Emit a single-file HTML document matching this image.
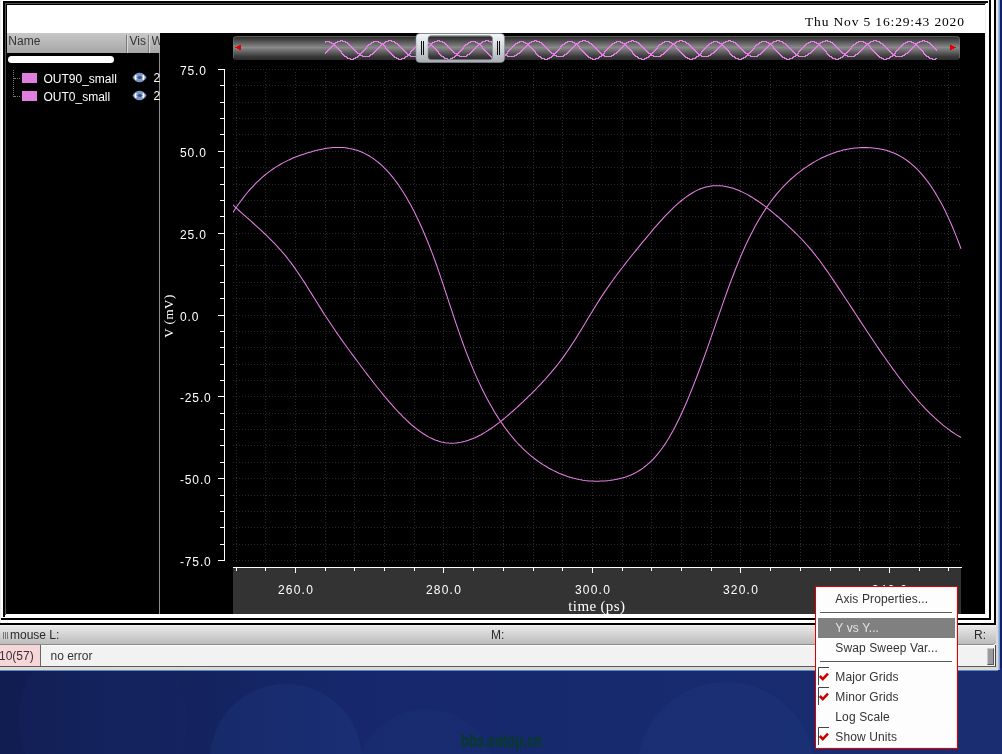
<!DOCTYPE html>
<html><head><meta charset="utf-8"><style>
*{margin:0;padding:0;box-sizing:border-box}
html,body{width:1002px;height:754px;overflow:hidden}
body{position:relative;font-family:"Liberation Sans",sans-serif;background:#16286a;will-change:transform}
.a{position:absolute}
.tk{font-family:"Liberation Sans",sans-serif;font-size:12px;letter-spacing:0.85px;fill:#fff}
.ser{font-family:"Liberation Serif",serif;fill:#fff}
.ui{font-size:12px;color:#2e2e2e;white-space:pre;line-height:1}
.mi{position:absolute;left:19.3px;font-size:12px;letter-spacing:0.12px;color:#333;white-space:pre;line-height:1}
</style></head><body>
<!-- desktop -->
<div class="a" style="left:0;top:660px;width:1002px;height:94px;background:linear-gradient(90deg,#111d50 0%,#16286b 35%,#192d70 100%)"></div>
<div class="a" style="left:18px;top:635px;width:170px;height:170px;border-radius:50%;background:rgba(30,50,120,0.12)"></div>
<div class="a" style="left:210px;top:684px;width:152px;height:152px;border-radius:50%;background:rgba(45,80,160,0.16)"></div>
<div class="a" style="left:356px;top:709px;width:140px;height:140px;border-radius:50%;background:rgba(45,80,160,0.07)"></div>
<div class="a" style="left:637px;top:682px;width:178px;height:178px;border-radius:50%;background:rgba(45,80,160,0.13)"></div>
<div class="a" style="left:460.5px;top:732px;font:bold 17px 'Liberation Sans',sans-serif;color:#0a3934;-webkit-text-stroke:0.6px #0a3934;transform:scale(0.775,1.04);transform-origin:0 0;white-space:pre;line-height:1">bbs.eetop.cn</div>
<!-- window base -->
<div class="a" style="left:0;top:0;width:996px;height:671px;background:#fff"></div>
<div class="a" style="left:0;top:0;width:1px;height:624px;background:#ececec"></div>
<div class="a" style="left:996px;top:0;width:2px;height:670px;background:#e8e4e0"></div>
<div class="a" style="left:998px;top:0;width:2px;height:670px;background:linear-gradient(90deg,#b4cce8,#5f8fc8)"></div>
<div class="a" style="left:1000px;top:0;width:2px;height:668px;background:#132262"></div>
<!-- outer frame lines -->
<div class="a" style="left:3px;top:1px;width:985px;height:2px;background:#000"></div>
<div class="a" style="left:5px;top:3px;width:981px;height:1px;background:#505050"></div>
<div class="a" style="left:6px;top:4px;width:979px;height:1px;background:#000"></div>
<div class="a" style="left:3px;top:1px;width:2px;height:616px;background:#000"></div>
<div class="a" style="left:5px;top:3px;width:1px;height:612px;background:#505050"></div>
<div class="a" style="left:6px;top:4px;width:1px;height:610px;background:#000"></div>
<div class="a" style="left:985px;top:5px;width:1px;height:609px;background:#f0f0f0"></div>
<div class="a" style="left:989px;top:0;width:2px;height:620px;background:#000"></div>
<div class="a" style="left:1px;top:618px;width:990px;height:2px;background:#000"></div>
<div class="a" style="left:0;top:623px;width:996px;height:2px;background:#000"></div>
<div class="a" style="left:994px;top:0;width:2px;height:625px;background:#000"></div>
<!-- date -->
<div class="a" style="left:805px;top:15.1px;font:13.5px 'Liberation Serif',serif;color:#000;letter-spacing:0.85px;white-space:pre;line-height:1">Thu Nov 5 16:29:43 2020</div>
<!-- left panel -->
<div class="a" style="left:7px;top:33px;width:153px;height:20px;background:linear-gradient(#c8c8c8,#a6a6a6)"></div>
<div class="a" style="left:126px;top:35px;width:1px;height:18px;background:#7a7a7a"></div>
<div class="a" style="left:127px;top:35px;width:1px;height:18px;background:#d8d8d8"></div>
<div class="a" style="left:148px;top:35px;width:1px;height:18px;background:#7a7a7a"></div>
<div class="a" style="left:149px;top:35px;width:1px;height:18px;background:#d8d8d8"></div>
<div class="a ui" style="left:8.3px;top:35px;color:#333">Name</div>
<div class="a ui" style="left:129.5px;top:35px;color:#333">Vis</div>
<div class="a ui" style="left:151.5px;top:35px;color:#333;width:8px;overflow:hidden">W</div>
<div class="a" style="left:7px;top:53px;width:152px;height:561px;background:#000"></div>
<div class="a" style="left:159px;top:53px;width:1px;height:561px;background:#8c8c8c"></div>
<div class="a" style="left:8px;top:56px;width:106px;height:7px;border-radius:4px;background:#fff"></div>
<div class="a" style="left:13px;top:70px;width:1px;height:27px;border-left:1px dotted #777"></div>
<div class="a" style="left:14px;top:78px;width:6px;height:1px;border-top:1px dotted #777"></div>
<div class="a" style="left:14px;top:96px;width:6px;height:1px;border-top:1px dotted #777"></div>
<div class="a" style="left:22px;top:73px;width:15px;height:10px;background:#e07ee0"></div>
<div class="a" style="left:22px;top:91px;width:15px;height:10px;background:#e07ee0"></div>
<div class="a ui" style="left:43.5px;top:72.5px;color:#fff">OUT90_small</div>
<div class="a ui" style="left:43.5px;top:90.5px;color:#fff">OUT0_small</div>
<svg class="a" style="left:132px;top:72px" width="15" height="11" viewBox="0 0 15 11"><path d="M0.5,5.5 Q3,1 7.5,0.8 Q12,1 14.5,5.5 Q12,10 7.5,10.3 Q3,10 0.5,5.5 Z" fill="#7f95c2"/><path d="M4.3,3.3 Q2.2,5.5 4.3,7.6 M10.7,3.3 Q12.8,5.5 10.7,7.6" fill="none" stroke="#fff" stroke-width="1.6"/><ellipse cx="7.8" cy="5.6" rx="2.2" ry="1.4" fill="#2f4c8e"/></svg>
<svg class="a" style="left:132px;top:90px" width="15" height="11" viewBox="0 0 15 11"><path d="M0.5,5.5 Q3,1 7.5,0.8 Q12,1 14.5,5.5 Q12,10 7.5,10.3 Q3,10 0.5,5.5 Z" fill="#7f95c2"/><path d="M4.3,3.3 Q2.2,5.5 4.3,7.6 M10.7,3.3 Q12.8,5.5 10.7,7.6" fill="none" stroke="#fff" stroke-width="1.6"/><ellipse cx="7.8" cy="5.6" rx="2.2" ry="1.4" fill="#2f4c8e"/></svg>
<div class="a ui" style="left:153.5px;top:72px;color:#fff;width:6px;overflow:hidden">2</div>
<div class="a ui" style="left:153.5px;top:90px;color:#fff;width:6px;overflow:hidden">2</div>
<!-- plot -->
<svg class="a" style="left:0;top:0;will-change:transform" width="1002" height="754">
<rect x="160" y="33" width="825" height="581" fill="#000"/>
<line x1="233" y1="69.5" x2="961" y2="69.5" stroke="#292929" stroke-dasharray="1 2"/>
<line x1="233" y1="85.5" x2="961" y2="85.5" stroke="#292929" stroke-dasharray="1 2"/>
<line x1="233" y1="102.5" x2="961" y2="102.5" stroke="#292929" stroke-dasharray="1 2"/>
<line x1="233" y1="118.5" x2="961" y2="118.5" stroke="#292929" stroke-dasharray="1 2"/>
<line x1="233" y1="134.5" x2="961" y2="134.5" stroke="#292929" stroke-dasharray="1 2"/>
<line x1="233" y1="151.5" x2="961" y2="151.5" stroke="#292929" stroke-dasharray="1 2"/>
<line x1="233" y1="167.5" x2="961" y2="167.5" stroke="#292929" stroke-dasharray="1 2"/>
<line x1="233" y1="184.5" x2="961" y2="184.5" stroke="#292929" stroke-dasharray="1 2"/>
<line x1="233" y1="200.5" x2="961" y2="200.5" stroke="#292929" stroke-dasharray="1 2"/>
<line x1="233" y1="216.5" x2="961" y2="216.5" stroke="#292929" stroke-dasharray="1 2"/>
<line x1="233" y1="233.5" x2="961" y2="233.5" stroke="#292929" stroke-dasharray="1 2"/>
<line x1="233" y1="249.5" x2="961" y2="249.5" stroke="#292929" stroke-dasharray="1 2"/>
<line x1="233" y1="265.5" x2="961" y2="265.5" stroke="#292929" stroke-dasharray="1 2"/>
<line x1="233" y1="282.5" x2="961" y2="282.5" stroke="#292929" stroke-dasharray="1 2"/>
<line x1="233" y1="298.5" x2="961" y2="298.5" stroke="#292929" stroke-dasharray="1 2"/>
<line x1="233" y1="315.5" x2="961" y2="315.5" stroke="#292929" stroke-dasharray="1 2"/>
<line x1="233" y1="331.5" x2="961" y2="331.5" stroke="#292929" stroke-dasharray="1 2"/>
<line x1="233" y1="347.5" x2="961" y2="347.5" stroke="#292929" stroke-dasharray="1 2"/>
<line x1="233" y1="364.5" x2="961" y2="364.5" stroke="#292929" stroke-dasharray="1 2"/>
<line x1="233" y1="380.5" x2="961" y2="380.5" stroke="#292929" stroke-dasharray="1 2"/>
<line x1="233" y1="396.5" x2="961" y2="396.5" stroke="#292929" stroke-dasharray="1 2"/>
<line x1="233" y1="413.5" x2="961" y2="413.5" stroke="#292929" stroke-dasharray="1 2"/>
<line x1="233" y1="429.5" x2="961" y2="429.5" stroke="#292929" stroke-dasharray="1 2"/>
<line x1="233" y1="445.5" x2="961" y2="445.5" stroke="#292929" stroke-dasharray="1 2"/>
<line x1="233" y1="462.5" x2="961" y2="462.5" stroke="#292929" stroke-dasharray="1 2"/>
<line x1="233" y1="478.5" x2="961" y2="478.5" stroke="#292929" stroke-dasharray="1 2"/>
<line x1="233" y1="495.5" x2="961" y2="495.5" stroke="#292929" stroke-dasharray="1 2"/>
<line x1="233" y1="511.5" x2="961" y2="511.5" stroke="#292929" stroke-dasharray="1 2"/>
<line x1="233" y1="527.5" x2="961" y2="527.5" stroke="#292929" stroke-dasharray="1 2"/>
<line x1="233" y1="544.5" x2="961" y2="544.5" stroke="#292929" stroke-dasharray="1 2"/>
<line x1="233" y1="560.5" x2="961" y2="560.5" stroke="#292929" stroke-dasharray="1 2"/>
<line x1="236.5" y1="72" x2="236.5" y2="562" stroke="#292929" stroke-dasharray="1 2"/>
<line x1="265.5" y1="72" x2="265.5" y2="562" stroke="#292929" stroke-dasharray="1 2"/>
<line x1="295.5" y1="72" x2="295.5" y2="562" stroke="#292929" stroke-dasharray="1 2"/>
<line x1="325.5" y1="72" x2="325.5" y2="562" stroke="#292929" stroke-dasharray="1 2"/>
<line x1="354.5" y1="72" x2="354.5" y2="562" stroke="#292929" stroke-dasharray="1 2"/>
<line x1="384.5" y1="72" x2="384.5" y2="562" stroke="#292929" stroke-dasharray="1 2"/>
<line x1="414.5" y1="72" x2="414.5" y2="562" stroke="#292929" stroke-dasharray="1 2"/>
<line x1="443.5" y1="72" x2="443.5" y2="562" stroke="#292929" stroke-dasharray="1 2"/>
<line x1="473.5" y1="72" x2="473.5" y2="562" stroke="#292929" stroke-dasharray="1 2"/>
<line x1="503.5" y1="72" x2="503.5" y2="562" stroke="#292929" stroke-dasharray="1 2"/>
<line x1="533.5" y1="72" x2="533.5" y2="562" stroke="#292929" stroke-dasharray="1 2"/>
<line x1="562.5" y1="72" x2="562.5" y2="562" stroke="#292929" stroke-dasharray="1 2"/>
<line x1="592.5" y1="72" x2="592.5" y2="562" stroke="#292929" stroke-dasharray="1 2"/>
<line x1="622.5" y1="72" x2="622.5" y2="562" stroke="#292929" stroke-dasharray="1 2"/>
<line x1="651.5" y1="72" x2="651.5" y2="562" stroke="#292929" stroke-dasharray="1 2"/>
<line x1="681.5" y1="72" x2="681.5" y2="562" stroke="#292929" stroke-dasharray="1 2"/>
<line x1="711.5" y1="72" x2="711.5" y2="562" stroke="#292929" stroke-dasharray="1 2"/>
<line x1="740.5" y1="72" x2="740.5" y2="562" stroke="#292929" stroke-dasharray="1 2"/>
<line x1="770.5" y1="72" x2="770.5" y2="562" stroke="#292929" stroke-dasharray="1 2"/>
<line x1="800.5" y1="72" x2="800.5" y2="562" stroke="#292929" stroke-dasharray="1 2"/>
<line x1="830.5" y1="72" x2="830.5" y2="562" stroke="#292929" stroke-dasharray="1 2"/>
<line x1="859.5" y1="72" x2="859.5" y2="562" stroke="#292929" stroke-dasharray="1 2"/>
<line x1="889.5" y1="72" x2="889.5" y2="562" stroke="#292929" stroke-dasharray="1 2"/>
<line x1="919.5" y1="72" x2="919.5" y2="562" stroke="#292929" stroke-dasharray="1 2"/>
<line x1="948.5" y1="72" x2="948.5" y2="562" stroke="#292929" stroke-dasharray="1 2"/>
<line x1="224.5" y1="69.5" x2="224.5" y2="561" stroke="#fff"/>
<line x1="218" y1="69.5" x2="225" y2="69.5" stroke="#fff"/>
<line x1="220" y1="85.5" x2="225" y2="85.5" stroke="#fff"/>
<line x1="220" y1="102.5" x2="225" y2="102.5" stroke="#fff"/>
<line x1="220" y1="118.5" x2="225" y2="118.5" stroke="#fff"/>
<line x1="220" y1="134.5" x2="225" y2="134.5" stroke="#fff"/>
<line x1="218" y1="151.5" x2="225" y2="151.5" stroke="#fff"/>
<line x1="220" y1="167.5" x2="225" y2="167.5" stroke="#fff"/>
<line x1="220" y1="184.5" x2="225" y2="184.5" stroke="#fff"/>
<line x1="220" y1="200.5" x2="225" y2="200.5" stroke="#fff"/>
<line x1="220" y1="216.5" x2="225" y2="216.5" stroke="#fff"/>
<line x1="218" y1="233.5" x2="225" y2="233.5" stroke="#fff"/>
<line x1="220" y1="249.5" x2="225" y2="249.5" stroke="#fff"/>
<line x1="220" y1="265.5" x2="225" y2="265.5" stroke="#fff"/>
<line x1="220" y1="282.5" x2="225" y2="282.5" stroke="#fff"/>
<line x1="220" y1="298.5" x2="225" y2="298.5" stroke="#fff"/>
<line x1="218" y1="315.5" x2="225" y2="315.5" stroke="#fff"/>
<line x1="220" y1="331.5" x2="225" y2="331.5" stroke="#fff"/>
<line x1="220" y1="347.5" x2="225" y2="347.5" stroke="#fff"/>
<line x1="220" y1="364.5" x2="225" y2="364.5" stroke="#fff"/>
<line x1="220" y1="380.5" x2="225" y2="380.5" stroke="#fff"/>
<line x1="218" y1="396.5" x2="225" y2="396.5" stroke="#fff"/>
<line x1="220" y1="413.5" x2="225" y2="413.5" stroke="#fff"/>
<line x1="220" y1="429.5" x2="225" y2="429.5" stroke="#fff"/>
<line x1="220" y1="445.5" x2="225" y2="445.5" stroke="#fff"/>
<line x1="220" y1="462.5" x2="225" y2="462.5" stroke="#fff"/>
<line x1="218" y1="478.5" x2="225" y2="478.5" stroke="#fff"/>
<line x1="220" y1="495.5" x2="225" y2="495.5" stroke="#fff"/>
<line x1="220" y1="511.5" x2="225" y2="511.5" stroke="#fff"/>
<line x1="220" y1="527.5" x2="225" y2="527.5" stroke="#fff"/>
<line x1="220" y1="544.5" x2="225" y2="544.5" stroke="#fff"/>
<line x1="218" y1="560.5" x2="225" y2="560.5" stroke="#fff"/>
<text x="180" y="74.9" class="tk">75.0</text>
<text x="180" y="156.9" class="tk">50.0</text>
<text x="180" y="238.9" class="tk">25.0</text>
<text x="180" y="320.9" class="tk">0.0</text>
<text x="180" y="401.9" class="tk">-25.0</text>
<text x="180" y="483.9" class="tk">-50.0</text>
<text x="180" y="565.9" class="tk">-75.0</text>
<rect x="233" y="567" width="728" height="47" fill="#333"/>
<line x1="233" y1="567.5" x2="962" y2="567.5" stroke="#fff"/>
<line x1="236.5" y1="567" x2="236.5" y2="571" stroke="#fff"/>
<line x1="265.5" y1="567" x2="265.5" y2="571" stroke="#fff"/>
<line x1="295.5" y1="567" x2="295.5" y2="573" stroke="#fff"/>
<line x1="325.5" y1="567" x2="325.5" y2="571" stroke="#fff"/>
<line x1="354.5" y1="567" x2="354.5" y2="571" stroke="#fff"/>
<line x1="384.5" y1="567" x2="384.5" y2="571" stroke="#fff"/>
<line x1="414.5" y1="567" x2="414.5" y2="571" stroke="#fff"/>
<line x1="443.5" y1="567" x2="443.5" y2="573" stroke="#fff"/>
<line x1="473.5" y1="567" x2="473.5" y2="571" stroke="#fff"/>
<line x1="503.5" y1="567" x2="503.5" y2="571" stroke="#fff"/>
<line x1="533.5" y1="567" x2="533.5" y2="571" stroke="#fff"/>
<line x1="562.5" y1="567" x2="562.5" y2="571" stroke="#fff"/>
<line x1="592.5" y1="567" x2="592.5" y2="573" stroke="#fff"/>
<line x1="622.5" y1="567" x2="622.5" y2="571" stroke="#fff"/>
<line x1="651.5" y1="567" x2="651.5" y2="571" stroke="#fff"/>
<line x1="681.5" y1="567" x2="681.5" y2="571" stroke="#fff"/>
<line x1="711.5" y1="567" x2="711.5" y2="571" stroke="#fff"/>
<line x1="740.5" y1="567" x2="740.5" y2="573" stroke="#fff"/>
<line x1="770.5" y1="567" x2="770.5" y2="571" stroke="#fff"/>
<line x1="800.5" y1="567" x2="800.5" y2="571" stroke="#fff"/>
<line x1="830.5" y1="567" x2="830.5" y2="571" stroke="#fff"/>
<line x1="859.5" y1="567" x2="859.5" y2="571" stroke="#fff"/>
<line x1="889.5" y1="567" x2="889.5" y2="573" stroke="#fff"/>
<line x1="919.5" y1="567" x2="919.5" y2="571" stroke="#fff"/>
<line x1="948.5" y1="567" x2="948.5" y2="571" stroke="#fff"/>
<text x="296.0" y="593.7" text-anchor="middle" class="tk" style="letter-spacing:1.2px">260.0</text>
<text x="444.0" y="593.7" text-anchor="middle" class="tk" style="letter-spacing:1.2px">280.0</text>
<text x="593.0" y="593.7" text-anchor="middle" class="tk" style="letter-spacing:1.2px">300.0</text>
<text x="741.0" y="593.7" text-anchor="middle" class="tk" style="letter-spacing:1.2px">320.0</text>
<text x="890.0" y="593.7" text-anchor="middle" class="tk" style="letter-spacing:1.2px">340.0</text>
<text x="596.8" y="611" text-anchor="middle" class="ser" style="font-size:15px;letter-spacing:0.35px">time (ps)</text>
<text transform="translate(173.2,316) rotate(-90)" text-anchor="middle" class="ser" style="font-size:13px;letter-spacing:0.5px">V (mV)</text>
<defs><clipPath id="pc"><rect x="233" y="62" width="729" height="505"/></clipPath><linearGradient id="sb" x1="0" y1="0" x2="0" y2="1"><stop offset="0" stop-color="#2a2a2a"/><stop offset="0.12" stop-color="#3c3c3c"/><stop offset="0.48" stop-color="#8a8a8a"/><stop offset="0.85" stop-color="#3a3a3a"/><stop offset="1" stop-color="#2a2a2a"/></linearGradient><linearGradient id="hd" x1="0" y1="0" x2="0" y2="1"><stop offset="0" stop-color="#f4f7f9"/><stop offset="0.5" stop-color="#d2d8dc"/><stop offset="1" stop-color="#a6aeb4"/></linearGradient><clipPath id="sbc"><rect x="233" y="36" width="727" height="24" rx="3"/></clipPath><mask id="hm"><rect x="0" y="0" width="1002" height="754" fill="#fff"/><rect x="416" y="33.5" width="88.5" height="29" rx="4" fill="#000"/><rect x="428" y="35.7" width="64.5" height="24" rx="3" fill="#fff"/></mask></defs>
<g clip-path="url(#pc)" fill="none" stroke="#e880e8" stroke-width="1.05"><path d="M233.0,212.4 L235.0,209.3 L237.0,206.3 L239.0,203.5 L241.0,200.7 L243.0,198.1 L245.0,195.5 L247.0,193.0 L249.0,190.7 L251.0,188.4 L253.0,186.3 L255.0,184.2 L257.0,182.2 L259.0,180.3 L261.0,178.4 L263.0,176.7 L265.0,175.0 L267.0,173.4 L269.0,171.8 L271.0,170.4 L273.0,169.0 L275.0,167.6 L277.0,166.4 L279.0,165.2 L281.0,164.0 L283.0,162.9 L285.0,161.9 L287.0,160.9 L289.0,159.9 L291.0,159.0 L293.0,158.1 L295.0,157.3 L297.0,156.5 L299.0,155.8 L301.0,155.1 L303.0,154.4 L305.0,153.7 L307.0,153.1 L309.0,152.5 L311.0,151.9 L313.0,151.3 L315.0,150.8 L317.0,150.3 L319.0,149.8 L321.0,149.4 L323.0,149.0 L325.0,148.6 L327.0,148.3 L329.0,148.0 L331.0,147.8 L333.0,147.6 L335.0,147.5 L337.0,147.5 L339.0,147.5 L341.0,147.5 L343.0,147.6 L345.0,147.8 L347.0,148.0 L349.0,148.4 L351.0,148.7 L353.0,149.2 L355.0,149.7 L357.0,150.3 L359.0,151.0 L361.0,151.8 L363.0,152.7 L365.0,153.6 L367.0,154.7 L369.0,155.8 L371.0,157.1 L373.0,158.4 L375.0,159.8 L377.0,161.4 L379.0,163.0 L381.0,164.7 L383.0,166.6 L385.0,168.6 L387.0,170.7 L389.0,172.9 L391.0,175.2 L393.0,177.6 L395.0,180.2 L397.0,182.9 L399.0,185.7 L401.0,188.7 L403.0,191.8 L405.0,195.0 L407.0,198.4 L409.0,201.9 L411.0,205.5 L413.0,209.3 L415.0,213.3 L417.0,217.4 L419.0,221.6 L421.0,226.0 L423.0,230.5 L425.0,235.2 L427.0,240.0 L429.0,245.0 L431.0,250.1 L433.0,255.4 L435.0,260.8 L437.0,266.4 L439.0,272.2 L441.0,278.1 L443.0,284.0 L445.0,290.1 L447.0,296.2 L449.0,302.3 L451.0,308.4 L453.0,314.4 L455.0,320.4 L457.0,326.4 L459.0,332.2 L461.0,337.9 L463.0,343.5 L465.0,348.9 L467.0,354.1 L469.0,359.2 L471.0,364.1 L473.0,368.9 L475.0,373.6 L477.0,378.1 L479.0,382.4 L481.0,386.7 L483.0,390.7 L485.0,394.7 L487.0,398.5 L489.0,402.3 L491.0,405.8 L493.0,409.3 L495.0,412.7 L497.0,415.9 L499.0,419.0 L501.0,422.0 L503.0,424.9 L505.0,427.7 L507.0,430.4 L509.0,433.0 L511.0,435.5 L513.0,437.9 L515.0,440.3 L517.0,442.5 L519.0,444.6 L521.0,446.7 L523.0,448.7 L525.0,450.6 L527.0,452.4 L529.0,454.1 L531.0,455.8 L533.0,457.4 L535.0,459.0 L537.0,460.5 L539.0,461.9 L541.0,463.3 L543.0,464.6 L545.0,465.8 L547.0,467.0 L549.0,468.2 L551.0,469.3 L553.0,470.4 L555.0,471.3 L557.0,472.3 L559.0,473.2 L561.0,474.0 L563.0,474.8 L565.0,475.6 L567.0,476.3 L569.0,476.9 L571.0,477.5 L573.0,478.1 L575.0,478.6 L577.0,479.1 L579.0,479.5 L581.0,479.8 L583.0,480.2 L585.0,480.5 L587.0,480.7 L589.0,480.9 L591.0,481.0 L593.0,481.1 L595.0,481.2 L597.0,481.2 L599.0,481.2 L601.0,481.1 L603.0,481.0 L605.0,480.9 L607.0,480.7 L609.0,480.5 L611.0,480.2 L613.0,479.9 L615.0,479.6 L617.0,479.2 L619.0,478.8 L621.0,478.3 L623.0,477.8 L625.0,477.2 L627.0,476.5 L629.0,475.7 L631.0,474.9 L633.0,474.0 L635.0,473.0 L637.0,471.9 L639.0,470.7 L641.0,469.5 L643.0,468.1 L645.0,466.5 L647.0,464.9 L649.0,463.2 L651.0,461.3 L653.0,459.3 L655.0,457.1 L657.0,454.8 L659.0,452.4 L661.0,449.8 L663.0,447.0 L665.0,444.1 L667.0,441.0 L669.0,437.8 L671.0,434.3 L673.0,430.7 L675.0,426.9 L677.0,423.0 L679.0,418.9 L681.0,414.7 L683.0,410.3 L685.0,405.8 L687.0,401.2 L689.0,396.4 L691.0,391.5 L693.0,386.5 L695.0,381.4 L697.0,376.3 L699.0,371.0 L701.0,365.6 L703.0,360.2 L705.0,354.6 L707.0,349.1 L709.0,343.4 L711.0,337.7 L713.0,331.9 L715.0,326.2 L717.0,320.4 L719.0,314.6 L721.0,308.8 L723.0,303.1 L725.0,297.4 L727.0,291.8 L729.0,286.3 L731.0,280.9 L733.0,275.7 L735.0,270.5 L737.0,265.5 L739.0,260.6 L741.0,255.8 L743.0,251.2 L745.0,246.8 L747.0,242.4 L749.0,238.3 L751.0,234.2 L753.0,230.4 L755.0,226.6 L757.0,223.0 L759.0,219.5 L761.0,216.2 L763.0,213.0 L765.0,209.9 L767.0,206.9 L769.0,204.0 L771.0,201.3 L773.0,198.6 L775.0,196.1 L777.0,193.6 L779.0,191.3 L781.0,189.0 L783.0,186.9 L785.0,184.8 L787.0,182.8 L789.0,180.9 L791.0,179.0 L793.0,177.3 L795.0,175.6 L797.0,173.9 L799.0,172.3 L801.0,170.8 L803.0,169.3 L805.0,167.9 L807.0,166.6 L809.0,165.2 L811.0,164.0 L813.0,162.7 L815.0,161.6 L817.0,160.4 L819.0,159.4 L821.0,158.3 L823.0,157.3 L825.0,156.4 L827.0,155.5 L829.0,154.7 L831.0,153.9 L833.0,153.2 L835.0,152.5 L837.0,151.8 L839.0,151.2 L841.0,150.7 L843.0,150.1 L845.0,149.7 L847.0,149.3 L849.0,148.9 L851.0,148.6 L853.0,148.3 L855.0,148.1 L857.0,147.9 L859.0,147.7 L861.0,147.6 L863.0,147.6 L865.0,147.6 L867.0,147.6 L869.0,147.7 L871.0,147.8 L873.0,148.0 L875.0,148.2 L877.0,148.5 L879.0,148.8 L881.0,149.2 L883.0,149.6 L885.0,150.1 L887.0,150.6 L889.0,151.2 L891.0,151.9 L893.0,152.7 L895.0,153.5 L897.0,154.5 L899.0,155.5 L901.0,156.6 L903.0,157.8 L905.0,159.1 L907.0,160.5 L909.0,162.0 L911.0,163.6 L913.0,165.3 L915.0,167.1 L917.0,169.0 L919.0,171.1 L921.0,173.3 L923.0,175.6 L925.0,178.1 L927.0,180.7 L929.0,183.4 L931.0,186.2 L933.0,189.3 L935.0,192.4 L937.0,195.7 L939.0,199.2 L941.0,202.8 L943.0,206.6 L945.0,210.6 L947.0,214.7 L949.0,219.1 L951.0,223.5 L953.0,228.2 L955.0,233.1 L957.0,238.1 L959.0,243.3 L961.0,248.8"/><path d="M233.0,204.9 L235.0,206.8 L237.0,208.7 L239.0,210.5 L241.0,212.3 L243.0,214.1 L245.0,215.9 L247.0,217.7 L249.0,219.4 L251.0,221.2 L253.0,223.0 L255.0,224.8 L257.0,226.6 L259.0,228.4 L261.0,230.2 L263.0,232.1 L265.0,234.0 L267.0,235.9 L269.0,237.8 L271.0,239.8 L273.0,241.9 L275.0,243.9 L277.0,246.1 L279.0,248.3 L281.0,250.5 L283.0,252.9 L285.0,255.2 L287.0,257.7 L289.0,260.3 L291.0,262.9 L293.0,265.6 L295.0,268.4 L297.0,271.2 L299.0,274.2 L301.0,277.2 L303.0,280.3 L305.0,283.4 L307.0,286.5 L309.0,289.7 L311.0,292.9 L313.0,296.1 L315.0,299.3 L317.0,302.5 L319.0,305.7 L321.0,308.9 L323.0,312.1 L325.0,315.2 L327.0,318.3 L329.0,321.3 L331.0,324.3 L333.0,327.3 L335.0,330.2 L337.0,333.1 L339.0,336.0 L341.0,338.9 L343.0,341.7 L345.0,344.5 L347.0,347.3 L349.0,350.0 L351.0,352.7 L353.0,355.4 L355.0,358.1 L357.0,360.8 L359.0,363.5 L361.0,366.2 L363.0,368.8 L365.0,371.5 L367.0,374.1 L369.0,376.7 L371.0,379.3 L373.0,381.9 L375.0,384.5 L377.0,387.0 L379.0,389.5 L381.0,392.0 L383.0,394.4 L385.0,396.9 L387.0,399.2 L389.0,401.6 L391.0,403.9 L393.0,406.2 L395.0,408.4 L397.0,410.5 L399.0,412.7 L401.0,414.7 L403.0,416.8 L405.0,418.7 L407.0,420.6 L409.0,422.5 L411.0,424.3 L413.0,426.0 L415.0,427.6 L417.0,429.2 L419.0,430.7 L421.0,432.1 L423.0,433.5 L425.0,434.8 L427.0,436.0 L429.0,437.1 L431.0,438.1 L433.0,439.0 L435.0,439.9 L437.0,440.6 L439.0,441.3 L441.0,441.9 L443.0,442.3 L445.0,442.7 L447.0,442.9 L449.0,443.1 L451.0,443.2 L453.0,443.2 L455.0,443.1 L457.0,442.9 L459.0,442.6 L461.0,442.3 L463.0,441.8 L465.0,441.3 L467.0,440.7 L469.0,440.1 L471.0,439.3 L473.0,438.5 L475.0,437.7 L477.0,436.7 L479.0,435.7 L481.0,434.7 L483.0,433.5 L485.0,432.4 L487.0,431.1 L489.0,429.8 L491.0,428.5 L493.0,427.1 L495.0,425.7 L497.0,424.2 L499.0,422.7 L501.0,421.1 L503.0,419.5 L505.0,417.9 L507.0,416.2 L509.0,414.5 L511.0,412.7 L513.0,411.0 L515.0,409.2 L517.0,407.4 L519.0,405.5 L521.0,403.6 L523.0,401.8 L525.0,399.9 L527.0,398.0 L529.0,396.0 L531.0,394.1 L533.0,392.1 L535.0,390.1 L537.0,388.0 L539.0,385.9 L541.0,383.8 L543.0,381.7 L545.0,379.5 L547.0,377.2 L549.0,374.9 L551.0,372.6 L553.0,370.2 L555.0,367.8 L557.0,365.3 L559.0,362.7 L561.0,360.1 L563.0,357.4 L565.0,354.6 L567.0,351.8 L569.0,348.9 L571.0,345.9 L573.0,342.8 L575.0,339.7 L577.0,336.5 L579.0,333.3 L581.0,330.0 L583.0,326.7 L585.0,323.4 L587.0,320.1 L589.0,316.8 L591.0,313.5 L593.0,310.2 L595.0,306.9 L597.0,303.7 L599.0,300.6 L601.0,297.4 L603.0,294.4 L605.0,291.4 L607.0,288.5 L609.0,285.6 L611.0,282.8 L613.0,280.0 L615.0,277.2 L617.0,274.5 L619.0,271.9 L621.0,269.3 L623.0,266.7 L625.0,264.1 L627.0,261.5 L629.0,259.0 L631.0,256.5 L633.0,254.0 L635.0,251.6 L637.0,249.1 L639.0,246.6 L641.0,244.2 L643.0,241.7 L645.0,239.3 L647.0,236.9 L649.0,234.5 L651.0,232.1 L653.0,229.7 L655.0,227.4 L657.0,225.1 L659.0,222.8 L661.0,220.6 L663.0,218.4 L665.0,216.2 L667.0,214.1 L669.0,212.1 L671.0,210.1 L673.0,208.1 L675.0,206.2 L677.0,204.4 L679.0,202.7 L681.0,201.0 L683.0,199.4 L685.0,197.8 L687.0,196.4 L689.0,195.0 L691.0,193.7 L693.0,192.5 L695.0,191.4 L697.0,190.4 L699.0,189.4 L701.0,188.6 L703.0,187.9 L705.0,187.3 L707.0,186.8 L709.0,186.4 L711.0,186.1 L713.0,185.8 L715.0,185.7 L717.0,185.7 L719.0,185.7 L721.0,185.8 L723.0,186.1 L725.0,186.4 L727.0,186.7 L729.0,187.2 L731.0,187.7 L733.0,188.3 L735.0,189.0 L737.0,189.8 L739.0,190.6 L741.0,191.4 L743.0,192.4 L745.0,193.4 L747.0,194.4 L749.0,195.5 L751.0,196.7 L753.0,197.9 L755.0,199.2 L757.0,200.5 L759.0,201.9 L761.0,203.3 L763.0,204.7 L765.0,206.2 L767.0,207.8 L769.0,209.3 L771.0,211.0 L773.0,212.6 L775.0,214.3 L777.0,216.0 L779.0,217.7 L781.0,219.5 L783.0,221.3 L785.0,223.1 L787.0,224.9 L789.0,226.8 L791.0,228.7 L793.0,230.6 L795.0,232.5 L797.0,234.5 L799.0,236.5 L801.0,238.5 L803.0,240.6 L805.0,242.8 L807.0,245.0 L809.0,247.3 L811.0,249.6 L813.0,252.1 L815.0,254.6 L817.0,257.2 L819.0,259.8 L821.0,262.5 L823.0,265.3 L825.0,268.1 L827.0,270.9 L829.0,273.8 L831.0,276.7 L833.0,279.6 L835.0,282.6 L837.0,285.6 L839.0,288.6 L841.0,291.6 L843.0,294.7 L845.0,297.7 L847.0,300.8 L849.0,303.8 L851.0,306.9 L853.0,309.9 L855.0,313.0 L857.0,316.0 L859.0,319.1 L861.0,322.1 L863.0,325.2 L865.0,328.2 L867.0,331.3 L869.0,334.3 L871.0,337.3 L873.0,340.3 L875.0,343.2 L877.0,346.2 L879.0,349.1 L881.0,352.1 L883.0,355.0 L885.0,357.8 L887.0,360.7 L889.0,363.5 L891.0,366.3 L893.0,369.1 L895.0,371.8 L897.0,374.5 L899.0,377.2 L901.0,379.8 L903.0,382.4 L905.0,385.0 L907.0,387.5 L909.0,390.0 L911.0,392.5 L913.0,394.8 L915.0,397.2 L917.0,399.5 L919.0,401.8 L921.0,404.0 L923.0,406.1 L925.0,408.3 L927.0,410.3 L929.0,412.4 L931.0,414.3 L933.0,416.2 L935.0,418.1 L937.0,419.9 L939.0,421.7 L941.0,423.4 L943.0,425.1 L945.0,426.7 L947.0,428.2 L949.0,429.7 L951.0,431.2 L953.0,432.5 L955.0,433.9 L957.0,435.1 L959.0,436.3 L961.0,437.5"/></g>
<rect x="233" y="36" width="727" height="24" rx="3" fill="url(#sb)"/>
<path d="M233.5,58 V39.5 a3,3 0 0 1 3,-3 H956.5 a3,3 0 0 1 3,3 V58" fill="none" stroke="#777" stroke-opacity="0.6"/>
<g clip-path="url(#sbc)" mask="url(#hm)" fill="none" stroke="#e57fe5" stroke-width="1" shape-rendering="crispEdges"><path d="M325,42.5 L326,41.5 L327,41.5 L328,41.5 L329,41.5 L330,42.5 L331,42.5 L332,43.5 L333,43.5 L334,44.5 L335,45.5 L336,46.5 L337,47.5 L338,48.5 L339,49.5 L340,50.5 L341,51.5 L342,53.5 L343,54.5 L344,55.5 L345,56.5 L346,56.5 L347,57.5 L348,58.5 L349,58.5 L350,58.5 L351,59.5 L352,59.5 L353,59.5 L354,58.5 L355,58.5 L356,57.5 L357,57.5 L358,56.5 L359,55.5 L360,54.5 L361,53.5 L362,52.5 L363,51.5 L364,50.5 L365,49.5 L366,48.5 L367,46.5 L368,45.5 L369,44.5 L370,44.5 L371,43.5 L372,42.5 L373,42.5 L374,41.5 L375,41.5 L376,41.5 L377,41.5 L378,41.5 L379,42.5 L380,42.5 L381,43.5 L382,44.5 L383,44.5 L384,45.5 L385,46.5 L386,48.5 L387,49.5 L388,50.5 L389,51.5 L390,52.5 L391,53.5 L392,54.5 L393,55.5 L394,56.5 L395,57.5 L396,57.5 L397,58.5 L398,58.5 L399,59.5 L400,59.5 L401,59.5 L402,58.5 L403,58.5 L404,58.5 L405,57.5 L406,56.5 L407,56.5 L408,55.5 L409,54.5 L410,53.5 L411,51.5 L412,50.5 L413,49.5 L414,48.5 L415,47.5 L416,46.5 L417,45.5 L418,44.5 L419,43.5 L420,43.5 L421,42.5 L422,42.5 L423,41.5 L424,41.5 L425,41.5 L426,41.5 L427,42.5 L428,42.5 L429,43.5 L430,43.5 L431,44.5 L432,45.5 L433,46.5 L434,47.5 L435,48.5 L436,49.5 L437,50.5 L438,51.5 L439,53.5 L440,54.5 L441,55.5 L442,56.5 L443,56.5 L444,57.5 L445,58.5 L446,58.5 L447,58.5 L448,59.5 L449,59.5 L450,59.5 L451,58.5 L452,58.5 L453,57.5 L454,57.5 L455,56.5 L456,55.5 L457,54.5 L458,53.5 L459,52.5 L460,51.5 L461,50.5 L462,49.5 L463,48.5 L464,46.5 L465,45.5 L466,44.5 L467,44.5 L468,43.5 L469,42.5 L470,42.5 L471,41.5 L472,41.5 L473,41.5 L474,41.5 L475,41.5 L476,42.5 L477,42.5 L478,43.5 L479,44.5 L480,44.5 L481,45.5 L482,46.5 L483,48.5 L484,49.5 L485,50.5 L486,51.5 L487,52.5 L488,53.5 L489,54.5 L490,55.5 L491,56.5 L492,57.5 L493,57.5 L494,58.5 L495,58.5 L496,59.5 L497,59.5 L498,59.5 L499,58.5 L500,58.5 L501,58.5 L502,57.5 L503,56.5 L504,56.5 L505,55.5 L506,54.5 L507,53.5 L508,51.5 L509,50.5 L510,49.5 L511,48.5 L512,47.5 L513,46.5 L514,45.5 L515,44.5 L516,43.5 L517,43.5 L518,42.5 L519,42.5 L520,41.5 L521,41.5 L522,41.5 L523,41.5 L524,42.5 L525,42.5 L526,43.5 L527,43.5 L528,44.5 L529,45.5 L530,46.5 L531,47.5 L532,48.5 L533,49.5 L534,50.5 L535,51.5 L536,53.5 L537,54.5 L538,55.5 L539,56.5 L540,56.5 L541,57.5 L542,58.5 L543,58.5 L544,58.5 L545,59.5 L546,59.5 L547,59.5 L548,58.5 L549,58.5 L550,57.5 L551,57.5 L552,56.5 L553,55.5 L554,54.5 L555,53.5 L556,52.5 L557,51.5 L558,50.5 L559,49.5 L560,48.5 L561,46.5 L562,45.5 L563,44.5 L564,44.5 L565,43.5 L566,42.5 L567,42.5 L568,41.5 L569,41.5 L570,41.5 L571,41.5 L572,41.5 L573,42.5 L574,42.5 L575,43.5 L576,44.5 L577,44.5 L578,45.5 L579,46.5 L580,48.5 L581,49.5 L582,50.5 L583,51.5 L584,52.5 L585,53.5 L586,54.5 L587,55.5 L588,56.5 L589,57.5 L590,57.5 L591,58.5 L592,58.5 L593,59.5 L594,59.5 L595,59.5 L596,58.5 L597,58.5 L598,58.5 L599,57.5 L600,56.5 L601,56.5 L602,55.5 L603,54.5 L604,53.5 L605,51.5 L606,50.5 L607,49.5 L608,48.5 L609,47.5 L610,46.5 L611,45.5 L612,44.5 L613,43.5 L614,43.5 L615,42.5 L616,42.5 L617,41.5 L618,41.5 L619,41.5 L620,41.5 L621,42.5 L622,42.5 L623,43.5 L624,43.5 L625,44.5 L626,45.5 L627,46.5 L628,47.5 L629,48.5 L630,49.5 L631,50.5 L632,51.5 L633,53.5 L634,54.5 L635,55.5 L636,56.5 L637,56.5 L638,57.5 L639,58.5 L640,58.5 L641,58.5 L642,59.5 L643,59.5 L644,59.5 L645,58.5 L646,58.5 L647,57.5 L648,57.5 L649,56.5 L650,55.5 L651,54.5 L652,53.5 L653,52.5 L654,51.5 L655,50.5 L656,49.5 L657,48.5 L658,46.5 L659,45.5 L660,44.5 L661,44.5 L662,43.5 L663,42.5 L664,42.5 L665,41.5 L666,41.5 L667,41.5 L668,41.5 L669,41.5 L670,42.5 L671,42.5 L672,43.5 L673,44.5 L674,44.5 L675,45.5 L676,46.5 L677,48.5 L678,49.5 L679,50.5 L680,51.5 L681,52.5 L682,53.5 L683,54.5 L684,55.5 L685,56.5 L686,57.5 L687,57.5 L688,58.5 L689,58.5 L690,59.5 L691,59.5 L692,59.5 L693,58.5 L694,58.5 L695,58.5 L696,57.5 L697,56.5 L698,56.5 L699,55.5 L700,54.5 L701,53.5 L702,51.5 L703,50.5 L704,49.5 L705,48.5 L706,47.5 L707,46.5 L708,45.5 L709,44.5 L710,43.5 L711,43.5 L712,42.5 L713,42.5 L714,41.5 L715,41.5 L716,41.5 L717,41.5 L718,42.5 L719,42.5 L720,43.5 L721,43.5 L722,44.5 L723,45.5 L724,46.5 L725,47.5 L726,48.5 L727,49.5 L728,50.5 L729,51.5 L730,53.5 L731,54.5 L732,55.5 L733,56.5 L734,56.5 L735,57.5 L736,58.5 L737,58.5 L738,58.5 L739,59.5 L740,59.5 L741,59.5 L742,58.5 L743,58.5 L744,57.5 L745,57.5 L746,56.5 L747,55.5 L748,54.5 L749,53.5 L750,52.5 L751,51.5 L752,50.5 L753,49.5 L754,48.5 L755,46.5 L756,45.5 L757,44.5 L758,44.5 L759,43.5 L760,42.5 L761,42.5 L762,41.5 L763,41.5 L764,41.5 L765,41.5 L766,41.5 L767,42.5 L768,42.5 L769,43.5 L770,44.5 L771,44.5 L772,45.5 L773,46.5 L774,48.5 L775,49.5 L776,50.5 L777,51.5 L778,52.5 L779,53.5 L780,54.5 L781,55.5 L782,56.5 L783,57.5 L784,57.5 L785,58.5 L786,58.5 L787,59.5 L788,59.5 L789,59.5 L790,58.5 L791,58.5 L792,58.5 L793,57.5 L794,56.5 L795,56.5 L796,55.5 L797,54.5 L798,53.5 L799,51.5 L800,50.5 L801,49.5 L802,48.5 L803,47.5 L804,46.5 L805,45.5 L806,44.5 L807,43.5 L808,43.5 L809,42.5 L810,42.5 L811,41.5 L812,41.5 L813,41.5 L814,41.5 L815,42.5 L816,42.5 L817,43.5 L818,43.5 L819,44.5 L820,45.5 L821,46.5 L822,47.5 L823,48.5 L824,49.5 L825,50.5 L826,51.5 L827,53.5 L828,54.5 L829,55.5 L830,56.5 L831,56.5 L832,57.5 L833,58.5 L834,58.5 L835,58.5 L836,59.5 L837,59.5 L838,59.5 L839,58.5 L840,58.5 L841,57.5 L842,57.5 L843,56.5 L844,55.5 L845,54.5 L846,53.5 L847,52.5 L848,51.5 L849,50.5 L850,49.5 L851,48.5 L852,46.5 L853,45.5 L854,44.5 L855,44.5 L856,43.5 L857,42.5 L858,42.5 L859,41.5 L860,41.5 L861,41.5 L862,41.5 L863,41.5 L864,42.5 L865,42.5 L866,43.5 L867,44.5 L868,44.5 L869,45.5 L870,46.5 L871,48.5 L872,49.5 L873,50.5 L874,51.5 L875,52.5 L876,53.5 L877,54.5 L878,55.5 L879,56.5 L880,57.5 L881,57.5 L882,58.5 L883,58.5 L884,59.5 L885,59.5 L886,59.5 L887,58.5 L888,58.5 L889,58.5 L890,57.5 L891,56.5 L892,56.5 L893,55.5 L894,54.5 L895,53.5 L896,51.5 L897,50.5 L898,49.5 L899,48.5 L900,47.5 L901,46.5 L902,45.5 L903,44.5 L904,43.5 L905,43.5 L906,42.5 L907,42.5 L908,41.5 L909,41.5 L910,41.5 L911,41.5 L912,42.5 L913,42.5 L914,43.5 L915,43.5 L916,44.5 L917,45.5 L918,46.5 L919,47.5 L920,48.5 L921,49.5 L922,50.5 L923,51.5 L924,53.5 L925,54.5 L926,55.5 L927,56.5 L928,56.5 L929,57.5 L930,58.5 L931,58.5 L932,58.5 L933,59.5 L934,59.5 L935,59.5 L936,58.5 L937,58.5"/><path d="M325,53.5 L326,52.5 L327,51.5 L328,50.5 L329,49.5 L330,48.5 L331,47.5 L332,46.5 L333,45.5 L334,44.5 L335,43.5 L336,42.5 L337,42.5 L338,41.5 L339,41.5 L340,41.5 L341,40.5 L342,40.5 L343,41.5 L344,41.5 L345,41.5 L346,42.5 L347,42.5 L348,43.5 L349,44.5 L350,45.5 L351,46.5 L352,47.5 L353,48.5 L354,49.5 L355,50.5 L356,51.5 L357,52.5 L358,53.5 L359,53.5 L360,54.5 L361,55.5 L362,55.5 L363,56.5 L364,56.5 L365,56.5 L366,56.5 L367,56.5 L368,56.5 L369,56.5 L370,55.5 L371,54.5 L372,54.5 L373,53.5 L374,52.5 L375,51.5 L376,50.5 L377,49.5 L378,48.5 L379,47.5 L380,46.5 L381,45.5 L382,44.5 L383,43.5 L384,43.5 L385,42.5 L386,41.5 L387,41.5 L388,41.5 L389,40.5 L390,40.5 L391,40.5 L392,41.5 L393,41.5 L394,41.5 L395,42.5 L396,43.5 L397,43.5 L398,44.5 L399,45.5 L400,46.5 L401,47.5 L402,48.5 L403,49.5 L404,50.5 L405,51.5 L406,52.5 L407,53.5 L408,54.5 L409,54.5 L410,55.5 L411,56.5 L412,56.5 L413,56.5 L414,56.5 L415,56.5 L416,56.5 L417,56.5 L418,55.5 L419,55.5 L420,54.5 L421,53.5 L422,53.5 L423,52.5 L424,51.5 L425,50.5 L426,49.5 L427,48.5 L428,47.5 L429,46.5 L430,45.5 L431,44.5 L432,43.5 L433,42.5 L434,42.5 L435,41.5 L436,41.5 L437,41.5 L438,40.5 L439,40.5 L440,41.5 L441,41.5 L442,41.5 L443,42.5 L444,42.5 L445,43.5 L446,44.5 L447,45.5 L448,46.5 L449,47.5 L450,48.5 L451,49.5 L452,50.5 L453,51.5 L454,52.5 L455,53.5 L456,53.5 L457,54.5 L458,55.5 L459,55.5 L460,56.5 L461,56.5 L462,56.5 L463,56.5 L464,56.5 L465,56.5 L466,56.5 L467,55.5 L468,54.5 L469,54.5 L470,53.5 L471,52.5 L472,51.5 L473,50.5 L474,49.5 L475,48.5 L476,47.5 L477,46.5 L478,45.5 L479,44.5 L480,43.5 L481,43.5 L482,42.5 L483,41.5 L484,41.5 L485,41.5 L486,40.5 L487,40.5 L488,40.5 L489,41.5 L490,41.5 L491,41.5 L492,42.5 L493,43.5 L494,43.5 L495,44.5 L496,45.5 L497,46.5 L498,47.5 L499,48.5 L500,49.5 L501,50.5 L502,51.5 L503,52.5 L504,53.5 L505,54.5 L506,54.5 L507,55.5 L508,56.5 L509,56.5 L510,56.5 L511,56.5 L512,56.5 L513,56.5 L514,56.5 L515,55.5 L516,55.5 L517,54.5 L518,53.5 L519,53.5 L520,52.5 L521,51.5 L522,50.5 L523,49.5 L524,48.5 L525,47.5 L526,46.5 L527,45.5 L528,44.5 L529,43.5 L530,42.5 L531,42.5 L532,41.5 L533,41.5 L534,41.5 L535,40.5 L536,40.5 L537,41.5 L538,41.5 L539,41.5 L540,42.5 L541,42.5 L542,43.5 L543,44.5 L544,45.5 L545,46.5 L546,47.5 L547,48.5 L548,49.5 L549,50.5 L550,51.5 L551,52.5 L552,53.5 L553,53.5 L554,54.5 L555,55.5 L556,55.5 L557,56.5 L558,56.5 L559,56.5 L560,56.5 L561,56.5 L562,56.5 L563,56.5 L564,55.5 L565,54.5 L566,54.5 L567,53.5 L568,52.5 L569,51.5 L570,50.5 L571,49.5 L572,48.5 L573,47.5 L574,46.5 L575,45.5 L576,44.5 L577,43.5 L578,43.5 L579,42.5 L580,41.5 L581,41.5 L582,41.5 L583,40.5 L584,40.5 L585,40.5 L586,41.5 L587,41.5 L588,41.5 L589,42.5 L590,43.5 L591,43.5 L592,44.5 L593,45.5 L594,46.5 L595,47.5 L596,48.5 L597,49.5 L598,50.5 L599,51.5 L600,52.5 L601,53.5 L602,54.5 L603,54.5 L604,55.5 L605,56.5 L606,56.5 L607,56.5 L608,56.5 L609,56.5 L610,56.5 L611,56.5 L612,55.5 L613,55.5 L614,54.5 L615,53.5 L616,53.5 L617,52.5 L618,51.5 L619,50.5 L620,49.5 L621,48.5 L622,47.5 L623,46.5 L624,45.5 L625,44.5 L626,43.5 L627,42.5 L628,42.5 L629,41.5 L630,41.5 L631,41.5 L632,40.5 L633,40.5 L634,41.5 L635,41.5 L636,41.5 L637,42.5 L638,42.5 L639,43.5 L640,44.5 L641,45.5 L642,46.5 L643,47.5 L644,48.5 L645,49.5 L646,50.5 L647,51.5 L648,52.5 L649,53.5 L650,53.5 L651,54.5 L652,55.5 L653,55.5 L654,56.5 L655,56.5 L656,56.5 L657,56.5 L658,56.5 L659,56.5 L660,56.5 L661,55.5 L662,54.5 L663,54.5 L664,53.5 L665,52.5 L666,51.5 L667,50.5 L668,49.5 L669,48.5 L670,47.5 L671,46.5 L672,45.5 L673,44.5 L674,43.5 L675,43.5 L676,42.5 L677,41.5 L678,41.5 L679,41.5 L680,40.5 L681,40.5 L682,40.5 L683,41.5 L684,41.5 L685,41.5 L686,42.5 L687,43.5 L688,43.5 L689,44.5 L690,45.5 L691,46.5 L692,47.5 L693,48.5 L694,49.5 L695,50.5 L696,51.5 L697,52.5 L698,53.5 L699,54.5 L700,54.5 L701,55.5 L702,56.5 L703,56.5 L704,56.5 L705,56.5 L706,56.5 L707,56.5 L708,56.5 L709,55.5 L710,55.5 L711,54.5 L712,53.5 L713,53.5 L714,52.5 L715,51.5 L716,50.5 L717,49.5 L718,48.5 L719,47.5 L720,46.5 L721,45.5 L722,44.5 L723,43.5 L724,42.5 L725,42.5 L726,41.5 L727,41.5 L728,41.5 L729,40.5 L730,40.5 L731,41.5 L732,41.5 L733,41.5 L734,42.5 L735,42.5 L736,43.5 L737,44.5 L738,45.5 L739,46.5 L740,47.5 L741,48.5 L742,49.5 L743,50.5 L744,51.5 L745,52.5 L746,53.5 L747,53.5 L748,54.5 L749,55.5 L750,55.5 L751,56.5 L752,56.5 L753,56.5 L754,56.5 L755,56.5 L756,56.5 L757,56.5 L758,55.5 L759,54.5 L760,54.5 L761,53.5 L762,52.5 L763,51.5 L764,50.5 L765,49.5 L766,48.5 L767,47.5 L768,46.5 L769,45.5 L770,44.5 L771,43.5 L772,43.5 L773,42.5 L774,41.5 L775,41.5 L776,41.5 L777,40.5 L778,40.5 L779,40.5 L780,41.5 L781,41.5 L782,41.5 L783,42.5 L784,43.5 L785,43.5 L786,44.5 L787,45.5 L788,46.5 L789,47.5 L790,48.5 L791,49.5 L792,50.5 L793,51.5 L794,52.5 L795,53.5 L796,54.5 L797,54.5 L798,55.5 L799,56.5 L800,56.5 L801,56.5 L802,56.5 L803,56.5 L804,56.5 L805,56.5 L806,55.5 L807,55.5 L808,54.5 L809,53.5 L810,53.5 L811,52.5 L812,51.5 L813,50.5 L814,49.5 L815,48.5 L816,47.5 L817,46.5 L818,45.5 L819,44.5 L820,43.5 L821,42.5 L822,42.5 L823,41.5 L824,41.5 L825,41.5 L826,40.5 L827,40.5 L828,41.5 L829,41.5 L830,41.5 L831,42.5 L832,42.5 L833,43.5 L834,44.5 L835,45.5 L836,46.5 L837,47.5 L838,48.5 L839,49.5 L840,50.5 L841,51.5 L842,52.5 L843,53.5 L844,53.5 L845,54.5 L846,55.5 L847,55.5 L848,56.5 L849,56.5 L850,56.5 L851,56.5 L852,56.5 L853,56.5 L854,56.5 L855,55.5 L856,54.5 L857,54.5 L858,53.5 L859,52.5 L860,51.5 L861,50.5 L862,49.5 L863,48.5 L864,47.5 L865,46.5 L866,45.5 L867,44.5 L868,43.5 L869,43.5 L870,42.5 L871,41.5 L872,41.5 L873,41.5 L874,40.5 L875,40.5 L876,40.5 L877,41.5 L878,41.5 L879,41.5 L880,42.5 L881,43.5 L882,43.5 L883,44.5 L884,45.5 L885,46.5 L886,47.5 L887,48.5 L888,49.5 L889,50.5 L890,51.5 L891,52.5 L892,53.5 L893,54.5 L894,54.5 L895,55.5 L896,56.5 L897,56.5 L898,56.5 L899,56.5 L900,56.5 L901,56.5 L902,56.5 L903,55.5 L904,55.5 L905,54.5 L906,53.5 L907,53.5 L908,52.5 L909,51.5 L910,50.5 L911,49.5 L912,48.5 L913,47.5 L914,46.5 L915,45.5 L916,44.5 L917,43.5 L918,42.5 L919,42.5 L920,41.5 L921,41.5 L922,41.5 L923,40.5 L924,40.5 L925,41.5 L926,41.5 L927,41.5 L928,42.5 L929,42.5 L930,43.5 L931,44.5 L932,45.5 L933,46.5 L934,47.5 L935,48.5 L936,49.5 L937,50.5"/></g>
<path d="M416,37.5 a4,4 0 0 1 4,-4 h80.5 a4,4 0 0 1 4,4 v21 a4,4 0 0 1 -4,4 h-80.5 a4,4 0 0 1 -4,-4 z M431,35.7 a3,3 0 0 0 -3,3 v18 a3,3 0 0 0 3,3 h58.5 a3,3 0 0 0 3,-3 v-18 a3,3 0 0 0 -3,-3 z" fill="url(#hd)" fill-rule="evenodd" stroke="#8a9196" stroke-width="0.6"/>
<path d="M421.5,41 v14 M423.5,41 v14 M497.5,41 v14 M499.5,41 v14" stroke="#111" stroke-width="1"/>
<path d="M235,47 h2 v-1 h2 v-1 h2 v5 h-2 v-1 h-2 v-1 h-2 z M950,45 h2 v1 h2 v1 h2 v1 h-2 v1 h-2 v1 h-2 z" fill="#e00000" shape-rendering="crispEdges"/>
</svg>
<!-- toolbar -->
<div class="a" style="left:0;top:625px;width:996px;height:20px;background:linear-gradient(#f6f6f6 0,#e8e8e8 1px,#bcbcbc 100%);border-bottom:1px solid #8c8c8c;border-radius:0 0 4px 0"></div>
<div class="a" style="left:3px;top:632px;width:5px;height:7px;background:repeating-linear-gradient(90deg,#777 0 1px,transparent 1px 2px)"></div>
<div class="a ui" style="left:10px;top:629px;color:#2a2a2a">mouse L:</div>
<div class="a ui" style="left:491px;top:629px;color:#2a2a2a">M:</div>
<div class="a ui" style="left:974px;top:629px;color:#2a2a2a">R:</div>
<!-- status -->
<div class="a" style="left:0;top:645px;width:996px;height:22px;background:#f2f2f2;border-top:1px solid #fff;border-bottom:1px solid #5a5a5a"></div>
<div class="a" style="left:0;top:645px;width:41px;height:21px;background:#f6d6d8;border-right:1px solid #666"></div>
<div class="a ui" style="left:-1px;top:650px;color:#333">10(57)</div>
<div class="a ui" style="left:50.5px;top:650px;color:#333">no error</div>
<div class="a" style="left:987px;top:648px;width:7px;height:17px;background:#9a9aa0;border-top:1px solid #c8c8c8;border-left:1px solid #c8c8c8;border-right:1px solid #555;border-bottom:1px solid #555"></div>
<div class="a" style="left:995px;top:645px;width:1px;height:22px;background:#444"></div>
<div class="a" style="left:0;top:667px;width:998px;height:3px;background:#dcd8d4"></div>
<div class="a" style="left:0;top:670px;width:998px;height:1px;background:#5a8ac8"></div>
<div class="a" style="left:996px;top:625px;width:2px;height:45px;background:#dcd8d4"></div>
<!-- menu -->
<div class="a" style="left:815px;top:586px;width:143px;height:163px;background:#fdfdfd;border:1px solid #dc0000">
 <div class="a" style="left:0;top:0;width:141px;height:161px;border:1px solid #f2fafa;border-right-color:#eaeaea;border-bottom-color:#eaeaea"></div>
 <div class="a" style="left:4px;top:25px;width:132px;height:1px;background:#5a5a5a"></div>
 <div class="a" style="left:2px;top:31px;width:137px;height:20px;background:#808080"></div>
 <div class="a" style="left:4px;top:74px;width:132px;height:1px;background:#5a5a5a"></div>
 <div class="mi" style="top:6.2px">Axis Properties...</div>
 <div class="mi" style="top:35.2px;color:#e4e4e4">Y vs Y...</div>
 <div class="mi" style="top:55.2px">Swap Sweep Var...</div>
 <div class="mi" style="top:84px">Major Grids</div>
 <div class="mi" style="top:104px">Minor Grids</div>
 <div class="mi" style="top:124px">Log Scale</div>
 <div class="mi" style="top:144px">Show Units</div>
 <svg class="a" style="left:0px;top:79px" width="14" height="82" viewBox="0 0 14 82">
  <g fill="none" stroke="#444" stroke-width="1"><path d="M2.5,19 V1.5 H13"/><path d="M2.5,39 V21.5 H13"/><path d="M2.5,79 V61.5 H13"/></g>
  <g fill="none" stroke="#d00000" stroke-width="2.6" stroke-linejoin="miter" stroke-linecap="butt"><path d="M3.8,10 L6.8,13.2 L12,7.6"/><path d="M3.8,30 L6.8,33.2 L12,27.6"/><path d="M3.8,70 L6.8,73.2 L12,67.6"/></g>
 </svg>
</div>
</body></html>
